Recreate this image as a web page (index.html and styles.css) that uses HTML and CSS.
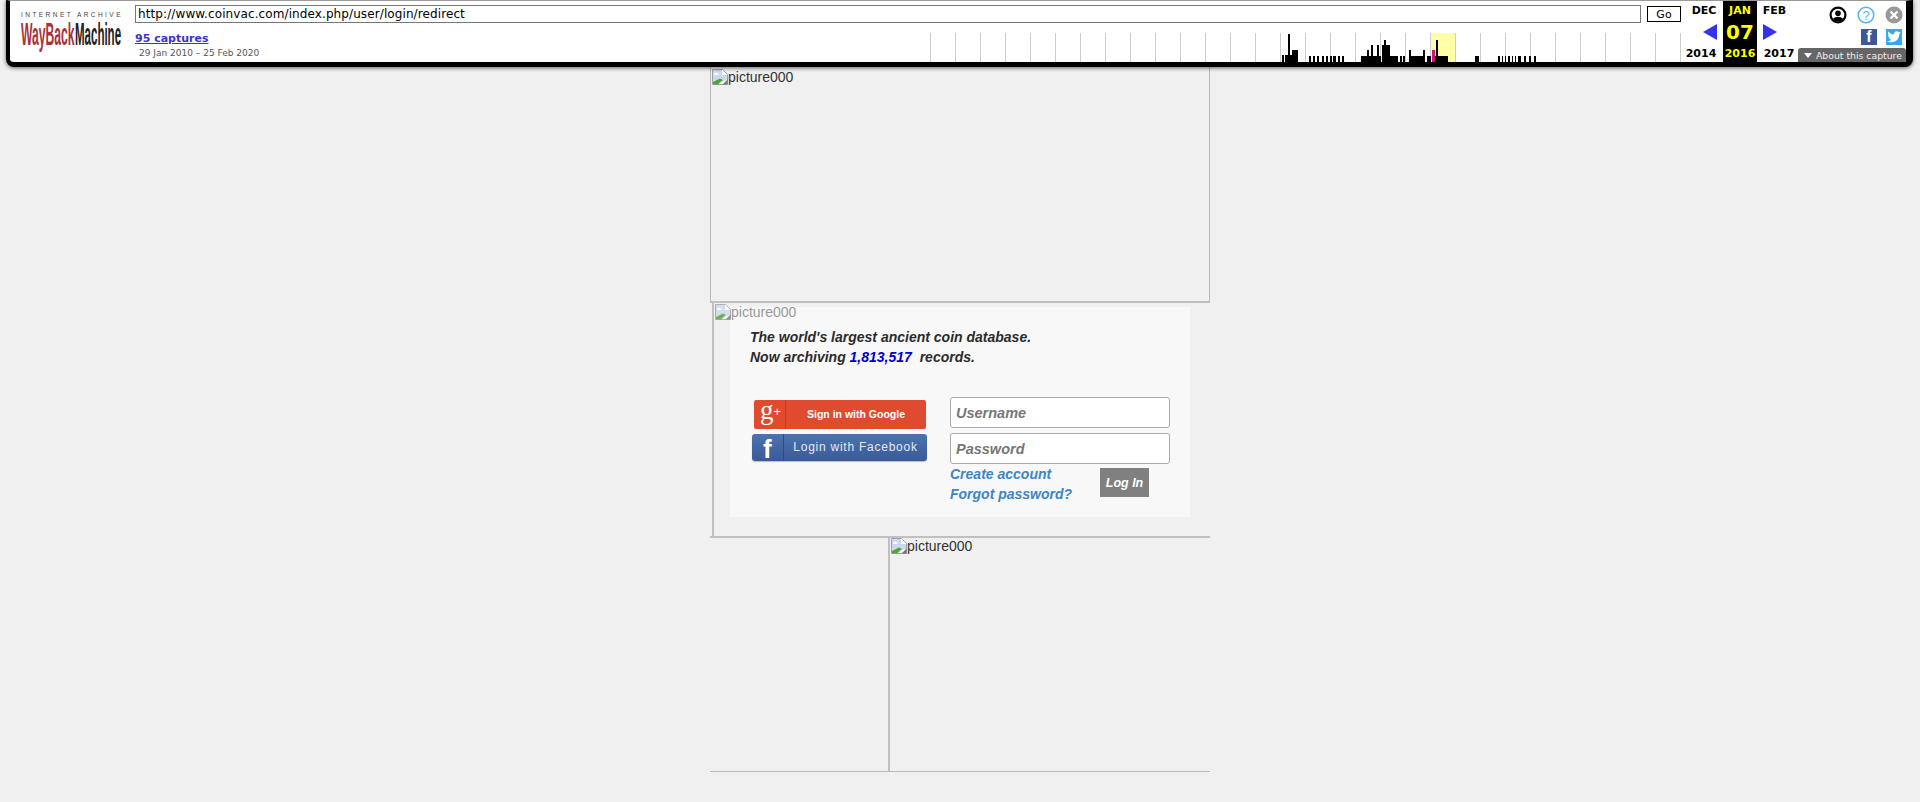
FILE: index.html
```html
<!DOCTYPE html>
<html lang="en">
<head>
    <meta charset="UTF-8">
    <title>CoinVac - Log in</title>
    <link rel="stylesheet" href="styles.css">
</head>
<body>
    <!-- broken image icon, used for every missing picture -->
    <svg class="defs" width="0" height="0">
        <symbol id="broken" viewBox="0 0 16 16">
            <path d="M0.5 0.5H10.5L15.5 5.5V15.5H0.5Z" fill="#fff" stroke="#a0a0a0"/>
            <path d="M1 1H10V6H15V11L1 15Z" fill="#c9daf0"/>
            <path d="M2 5Q4 2.5 6 4.5L7 6H2Z" fill="#fff"/>
            <path d="M1 15.5V13L8 9.5L11 11L6 15.5Z" fill="#4fa53a"/>
            <path d="M10.5 15.5L15.5 10.5V15.5Z" fill="#777"/>
        </symbol>
    </svg>

    <div class="toolbar">
        <div class="logo">
            <div class="logo-top">INTERNET ARCHIVE</div>
            <svg class="logo-word" width="102" height="32" viewBox="0 0 102 32">
                <text transform="translate(0 24) scale(.38 1)" font-size="32" class="word-red">WayBack</text>
                <text transform="translate(54 24) scale(.36 1)" font-size="32" class="word-dark">Machine</text>
            </svg>
        </div>
        <div class="middle">
            <div class="url-row">
                <input class="url" type="text" value="http://www.coinvac.com/index.php/user/login/redirect">
                <button class="go">Go</button>
            </div>
            <div class="info-row">
                <div class="captures">
                    <a href="#" class="captures-link">95 captures</a>
                    <div class="captures-date">29 Jan 2010 – 25 Feb 2020</div>
                </div>
                <svg class="spark" width="756" height="29" viewBox="0 0 756 29" shape-rendering="crispEdges">
                    <rect x="506" y="0" width="24" height="29" fill="#ffffa8"/>
                    <path d="M357 29v-7h2v7z M360 29v-7h3v7z M363 29v-28h2v28z M365 29v-7h2v7z M367 29v-12h6v12z
                             M384 29v-6h2v6z M388 29v-6h2v6z M392 29v-6h2v6z M397 29v-6h2v6z M401 29v-6h2v6z M405 29v-6h2v6z M408 29v-6h3v6z M413 29v-6h2v6z M417 29v-6h2v6z
                             M436 29v-6h6v6z M442 29v-12h2v12z M444 29v-6h2v6z M446 29v-17h2v17z M448 29v-6h4v6z M452 29v-17h2v17z M454 29v-6h2v6z M457 29v-17h2v17z M459 29v-22h2v22z M461 29v-17h4v17z M465 29v-6h8v6z
                             M475 29v-6h2v6z M478 29v-6h2v6z M484 29v-12h2v12z M486 29v-6h12v6z M498 29v-12h2v12z M502 29v-6h4v6z M510 29v-6h1v6z M511 29v-22h2v22z M513 29v-6h10v6z
                             M550 29v-6h4v6z
                             M573 29v-6h2v6z M577 29v-6h1v6z M580 29v-6h1v6z M583 29v-6h2v6z M587 29v-6h1v6z M590 29v-6h1v6z M593 29v-6h3v6z M599 29v-6h2v6z M604 29v-6h2v6z M609 29v-6h2v6z"/>
                    <rect x="507" y="17" width="3" height="12" fill="#d4107f"/>
                </svg>
            </div>
        </div>
        <div class="calendar">
            <div class="cal-col">
                <div class="cal-month">DEC</div>
                <div class="cal-mid cal-mid-prev"><span class="arrow-left"></span></div>
                <div class="cal-year cal-year-prev">2014</div>
            </div>
            <div class="cal-col cal-current">
                <div class="cal-month">JAN</div>
                <div class="cal-mid cal-day">07</div>
                <div class="cal-year">2016</div>
            </div>
            <div class="cal-col">
                <div class="cal-month cal-month-next">FEB</div>
                <div class="cal-mid cal-mid-next"><span class="arrow-right"></span></div>
                <div class="cal-year cal-year-next">2017</div>
            </div>
        </div>
        <div class="actions">
            <div class="icon-row">
                <svg width="18" height="18" viewBox="0 0 18 18">
                    <circle cx="9" cy="9" r="8.5"/>
                    <circle cx="9" cy="9" r="6.3" fill="#fff"/>
                    <circle cx="9" cy="7.2" r="2.8"/>
                    <path d="M3.5 13Q9 8.5 14.5 13Q9 18 3.5 13Z"/>
                </svg>
                <svg width="18" height="18" viewBox="0 0 18 18">
                    <circle cx="9" cy="9" r="7.8" fill="#fff" stroke="#56b4e9" stroke-width="1.6"/>
                    <text x="9" y="13.6" text-anchor="middle" font-size="13" class="help-mark">?</text>
                </svg>
                <svg width="18" height="18" viewBox="0 0 18 18">
                    <circle cx="9" cy="9" r="8.5" fill="#999"/>
                    <path d="M5.5 5.5L12.5 12.5M12.5 5.5L5.5 12.5" stroke="#fff" stroke-width="2.4"/>
                </svg>
            </div>
            <div class="share-row">
                <div class="share share-fb">f</div>
                <div class="share share-tw">
                    <svg width="14" height="12" viewBox="0 0 14 12">
                        <path d="M14 1.6c-.5.2-1 .4-1.6.4.6-.4 1-.9 1.2-1.5-.5.3-1.1.5-1.8.7C11.300.6 10.600.2 9.700.2 8.200.2 7 1.400 7 3c0 .2 0 .4.1.6C4.800 3.500 2.700 2.400 1.300.6 1 1 .9 1.500.9 2c0 1 .5 1.800 1.200 2.300-.4 0-.9-.1-1.200-.3 0 1.300 1 2.500 2.200 2.700-.4.1-.8.1-1.200.1.300 1.100 1.300 1.900 2.600 1.900C3.500 9.500 2.200 10 .8 10H0c1.200.8 2.700 1.200 4.300 1.200 5.200 0 8-4.300 8-8v-.4c.6-.3 1.200-.8 1.700-1.200z" fill="#fff"/>
                    </svg>
                </div>
            </div>
        </div>
        <div class="about"><span class="about-arrow"></span>About this capture</div>
    </div>

    <div class="page">
        <div class="block-top">
            <div class="alt"><svg class="alt-icon" width="16" height="16"><use href="#broken"/></svg>picture000</div>
        </div>

        <div class="block-login">
            <div class="login-inner">
                <div class="alt alt-faded"><svg class="alt-icon" width="16" height="16"><use href="#broken"/></svg>picture000</div>
                <div class="panel">
                    <p class="headline">The world's largest ancient coin database.<br>
                    Now archiving <span class="count">1,813,517</span>&nbsp; records.</p>
                    <div class="login-row">
                        <div class="social">
                            <a href="#" class="btn-google">
                                <span class="btn-google-icon">g<sup>+</sup></span>
                                <span class="btn-google-text">Sign in with Google</span>
                            </a>
                            <a href="#" class="btn-fb">
                                <span class="btn-fb-icon">f</span>
                                <span class="btn-fb-text">Login with Facebook</span>
                            </a>
                        </div>
                        <form class="login-form">
                            <input class="field" type="text" placeholder="Username">
                            <input class="field" type="password" placeholder="Password">
                            <div class="form-foot">
                                <div class="links">
                                    <a href="#">Create account</a>
                                    <a href="#">Forgot password?</a>
                                </div>
                                <button type="button" class="login-btn">Log In</button>
                            </div>
                        </form>
                    </div>
                </div>
            </div>
        </div>

        <div class="block-bottom">
            <div class="bottom-left"></div>
            <div class="bottom-right">
                <div class="alt"><svg class="alt-icon" width="16" height="16"><use href="#broken"/></svg>picture000</div>
            </div>
        </div>
    </div>
</body>
</html>
```

FILE: styles.css
```css
body {
    margin: 0;
    background-color: #f0f0f0;
    font-family: "Liberation Sans", Arial, sans-serif;
    color: #333;
}
a {
    text-decoration: none;
}
.defs {
    display: block;
}

/* wayback toolbar */
.toolbar {
    position: absolute;
    top: 0;
    left: 6px;
    width: 1907px;
    height: 67px;
    box-sizing: border-box;
    display: flex;
    background-color: #fff;
    border-top: 1px solid #999;
    border-left: 4px solid #000;
    border-right: 7px solid #000;
    border-bottom: 5px solid #000;
    border-radius: 0 0 8px 8px;
    box-shadow: 0 1px 4px rgba(0, 0, 0, 0.6);
    font-family: "DejaVu Sans", Verdana, sans-serif;
    color: #000;
}
.logo {
    width: 125px;
    box-sizing: border-box;
    padding: 10px 0 0 11px;
    flex: none;
}
.logo-top {
    font-family: "Liberation Sans", Arial, sans-serif;
    font-size: 6.5px;
    line-height: 8px;
    letter-spacing: 2.45px;
    color: #444;
    white-space: nowrap;
}
.logo-word {
    display: block;
    margin-top: 2px;
}
.logo-word text {
    font-family: "Liberation Sans", Arial, sans-serif;
    font-weight: bold;
}
.word-red {
    fill: #a9333a;
}
.word-dark {
    fill: #222;
}
.middle {
    width: 1550px;
    flex: none;
    padding-top: 4px;
}
.url-row {
    display: flex;
    gap: 6px;
    height: 18px;
}
.url {
    width: 1506px;
    height: 18px;
    box-sizing: border-box;
    padding: 0 2px;
    border: 1px solid #777;
    font-family: "DejaVu Sans", Verdana, sans-serif;
    font-size: 12px;
    letter-spacing: 0.1px;
    color: #000;
    outline: none;
}
.go {
    width: 34px;
    height: 16px;
    margin-top: 1px;
    padding: 0;
    background-color: #fff;
    border: 1px solid #000;
    font-family: "DejaVu Sans", Verdana, sans-serif;
    font-size: 11px;
    color: #000;
}
.info-row {
    display: flex;
    justify-content: space-between;
    margin-top: 8px;
}
.captures-link {
    display: block;
    font-size: 11px;
    line-height: 15px;
    font-weight: bold;
    color: #3b34cc;
    text-decoration: underline;
}
.captures-date {
    margin: 2px 0 0 4px;
    font-size: 9px;
    line-height: 11px;
    color: #555;
    white-space: nowrap;
}
.spark {
    display: block;
    margin-top: 2px;
    margin-right: 4px;
    background: repeating-linear-gradient(90deg, transparent 0 5px, #ccc 5px 6px, transparent 6px 25px);
}
.calendar {
    display: flex;
    flex: none;
    font-size: 11px;
    font-weight: bold;
    text-align: center;
}
.cal-col {
    width: 38px;
    display: flex;
    flex-direction: column;
}
.cal-current {
    width: 34px;
    background-color: #000;
    color: #ff0;
}
.cal-month {
    height: 19px;
    line-height: 19px;
}
.cal-month-next {
    margin-left: -3px;
}
.cal-mid {
    height: 24px;
    display: flex;
    align-items: center;
}
.cal-mid-prev {
    justify-content: flex-end;
    padding-right: 6px;
}
.cal-mid-next {
    padding-left: 6px;
}
.cal-day {
    justify-content: center;
    font-size: 20px;
}
.cal-year {
    height: 18px;
    line-height: 20px;
}
.cal-year-prev {
    margin-left: -6px;
}
.cal-year-next {
    margin-right: -6px;
}
.arrow-left {
    border-top: 8px solid transparent;
    border-bottom: 8px solid transparent;
    border-right: 14px solid #3333ee;
}
.arrow-right {
    border-top: 8px solid transparent;
    border-bottom: 8px solid transparent;
    border-left: 14px solid #3333ee;
}
.actions {
    flex: 1;
    padding-top: 5px;
}
.icon-row {
    display: flex;
    justify-content: flex-end;
    gap: 10px;
    padding-right: 3px;
}
.help-mark {
    font-family: "Liberation Sans", Arial, sans-serif;
    fill: #56b4e9;
}
.share-row {
    display: flex;
    justify-content: flex-end;
    gap: 9px;
    margin-top: 5px;
    padding-right: 4px;
}
.share {
    width: 16px;
    height: 16px;
    display: flex;
    align-items: center;
    justify-content: center;
}
.share-fb {
    background-color: #3b5998;
    color: #fff;
    font-family: "Liberation Sans", Arial, sans-serif;
    font-size: 16px;
    font-weight: bold;
}
.share-tw {
    background-color: #33aaee;
}
.about {
    position: absolute;
    right: 0;
    bottom: 0;
    width: 108px;
    height: 14px;
    box-sizing: border-box;
    display: flex;
    align-items: center;
    gap: 4px;
    padding-left: 6px;
    background-color: #666;
    border-radius: 3px 3px 0 0;
    color: #eee;
    font-size: 9.3px;
    white-space: nowrap;
}
.about-arrow {
    border-left: 4px solid transparent;
    border-right: 4px solid transparent;
    border-top: 5px solid #fff;
}

/* page body */
.page {
    width: 500px;
    margin: 0 auto;
    padding-top: 60px;
}
.alt {
    display: flex;
    font-size: 14px;
    line-height: 16px;
    color: #333;
}
.alt-icon {
    flex: none;
}
.alt-faded {
    position: absolute;
    top: 1px;
    left: 1px;
    color: #999;
}
.alt-faded .alt-icon {
    opacity: 0.8;
}
.block-top {
    height: 243px;
    box-sizing: border-box;
    padding: 9px 1px 0;
    border-left: 1px solid #bbb;
    border-right: 1px solid #bbb;
    border-bottom: 2px solid #c0c0c0;
}
.block-login {
    height: 235px;
    box-sizing: border-box;
    padding-left: 2px;
    border-bottom: 2px solid #c0c0c0;
}
.login-inner {
    position: relative;
    height: 100%;
    box-sizing: border-box;
    padding: 4px 0 0 16px;
    border-left: 2px solid #c0c0c0;
}
.panel {
    width: 460px;
    height: 210px;
    box-sizing: border-box;
    padding: 20px 20px 0;
    background-color: #f8f8f8;
}
.headline {
    margin: 0;
    font-size: 14px;
    line-height: 20px;
    font-weight: bold;
    font-style: italic;
    color: #2b2b2b;
}
.count {
    color: #0000cc;
}
.login-row {
    display: flex;
    margin-top: 30px;
}
.social {
    width: 200px;
    flex: none;
    padding: 3px 0 0 2px;
    box-sizing: border-box;
}
.btn-google {
    width: 172px;
    height: 29px;
    margin-left: 2px;
    display: flex;
    background-color: #e04a2f;
    border-radius: 2px;
    color: #fff;
}
.btn-google-icon {
    width: 32px;
    flex: none;
    box-sizing: border-box;
    padding-left: 6px;
    border-right: 1px solid #c23d25;
    font-family: "Liberation Serif", serif;
    font-size: 27px;
    line-height: 21px;
}
.btn-google-icon sup {
    font-family: "Liberation Sans", Arial, sans-serif;
    font-size: 13px;
    line-height: 0;
    vertical-align: 3px;
}
.btn-google-text {
    flex: 1;
    font-size: 10.5px;
    line-height: 29px;
    font-weight: bold;
    text-align: center;
}
.btn-fb {
    width: 175px;
    height: 27px;
    margin-top: 5px;
    display: flex;
    background: linear-gradient(#4b73b1, #3a5a96);
    border-radius: 3px;
    box-shadow: 0 1px 1px rgba(0, 0, 0, 0.25);
    color: #fff;
}
.btn-fb-icon {
    width: 32px;
    flex: none;
    box-sizing: border-box;
    padding-left: 11px;
    border-right: 1px solid #2f4c82;
    font-size: 26px;
    line-height: 30px;
    font-weight: bold;
}
.btn-fb-text {
    flex: 1;
    font-size: 12px;
    line-height: 26px;
    letter-spacing: 0.75px;
    text-align: center;
    white-space: nowrap;
    color: #e4e9f2;
}
.login-form {
    width: 220px;
}
.field {
    display: block;
    width: 220px;
    height: 31px;
    box-sizing: border-box;
    margin-bottom: 5px;
    padding: 0 5px;
    background-color: #fff;
    border: 1px solid #aaa;
    border-radius: 3px;
    font-family: "Liberation Sans", Arial, sans-serif;
    font-size: 14.5px;
    font-weight: bold;
    font-style: italic;
    outline: none;
}
.field::placeholder {
    color: #777;
    opacity: 1;
}
.form-foot {
    display: flex;
    margin-top: -5px;
}
.links {
    width: 150px;
    flex: none;
    display: flex;
    flex-direction: column;
}
.links a {
    font-size: 14px;
    line-height: 20px;
    font-weight: bold;
    font-style: italic;
    color: #3d85c6;
    white-space: nowrap;
}
.login-btn {
    width: 49px;
    height: 29px;
    margin-top: 4px;
    padding: 0;
    background-color: #808080;
    border: none;
    color: #fff;
    font-family: "Liberation Sans", Arial, sans-serif;
    font-size: 12.5px;
    font-weight: bold;
    font-style: italic;
}
.block-bottom {
    display: flex;
    height: 234px;
    box-sizing: border-box;
    border-bottom: 1px solid #bbb;
}
.bottom-left {
    width: 178px;
    flex: none;
}
.bottom-right {
    flex: 1;
    padding-left: 1px;
    border-left: 2px solid #c0c0c0;
}
```
